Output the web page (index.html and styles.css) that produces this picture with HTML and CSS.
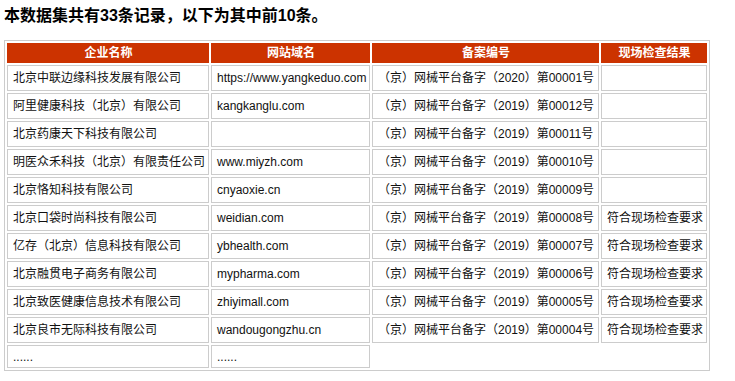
FILE: index.html
```html
<!DOCTYPE html>
<html lang="zh-CN">
<head>
<meta charset="utf-8">
<link rel="stylesheet" href="styles.css">
</head>
<body>
<h3 class="title">本数据集共有33条记录，以下为其中前10条。</h3>
<table class="data">
  <thead>
    <tr>
      <th class="c1">企业名称</th>
      <th class="c2">网站域名</th>
      <th class="c3">备案编号</th>
      <th class="c4">现场检查结果</th>
    </tr>
  </thead>
  <tbody>
    <tr><td>北京中联边缘科技发展有限公司</td><td>https://www.yangkeduo.com</td><td>（京）网械平台备字（2020）第00001号</td><td></td></tr>
    <tr><td>阿里健康科技（北京）有限公司</td><td>kangkanglu.com</td><td>（京）网械平台备字（2019）第00012号</td><td></td></tr>
    <tr><td>北京药康天下科技有限公司</td><td></td><td>（京）网械平台备字（2019）第00011号</td><td></td></tr>
    <tr><td>明医众禾科技（北京）有限责任公司</td><td>www.miyzh.com</td><td>（京）网械平台备字（2019）第00010号</td><td></td></tr>
    <tr><td>北京恪知科技有限公司</td><td>cnyaoxie.cn</td><td>（京）网械平台备字（2019）第00009号</td><td></td></tr>
    <tr><td>北京口袋时尚科技有限公司</td><td>weidian.com</td><td>（京）网械平台备字（2019）第00008号</td><td>符合现场检查要求</td></tr>
    <tr><td>亿存（北京）信息科技有限公司</td><td>ybhealth.com</td><td>（京）网械平台备字（2019）第00007号</td><td>符合现场检查要求</td></tr>
    <tr><td>北京融贯电子商务有限公司</td><td>mypharma.com</td><td>（京）网械平台备字（2019）第00006号</td><td>符合现场检查要求</td></tr>
    <tr><td>北京致医健康信息技术有限公司</td><td>zhiyimall.com</td><td>（京）网械平台备字（2019）第00005号</td><td>符合现场检查要求</td></tr>
    <tr><td>北京良市无际科技有限公司</td><td>wandougongzhu.cn</td><td>（京）网械平台备字（2019）第00004号</td><td>符合现场检查要求</td></tr>
    <tr class="more"><td>......</td><td>......</td></tr>
  </tbody>
</table>
</body>
</html>
```
FILE: styles.css
```css
html, body {
  margin: 0;
  padding: 0;
  background: #fff;
}
body {
  padding: 6px 4px 0 4px;
  font-family: "Liberation Sans", "Noto Sans CJK SC", sans-serif;
  color: #111;
}
.title {
  margin: 0 0 14px 0;
  font-size: 16px;
  line-height: 20px;
  font-weight: bold;
  color: #000;
}
.data {
  table-layout: fixed;
  width: 706px;
  border: 1px solid #ccc;
  border-spacing: 2px;
  border-collapse: separate;
  font-size: 12px;
}
.data th, .data td {
  box-sizing: border-box;
  padding: 0 4px 0 5px;
  white-space: nowrap;
  overflow: hidden;
}
.data th {
  height: 20px;
  background: #cc3300;
  color: #fff;
  font-weight: bold;
  text-align: center;
  border: 1px solid #cc3300;
  line-height: 16px;
}
.data td {
  height: 26px;
  border: 1px solid #ccc;
  text-align: left;
  line-height: 16px;
  color: #111;
}
.data .c1 { width: 202px; }
.data .c2 { width: 159px; }
.data .c3 { width: 227px; }
.data .c4 { width: 106px; }
.data tr.more td {
  height: 23px;
}
```
